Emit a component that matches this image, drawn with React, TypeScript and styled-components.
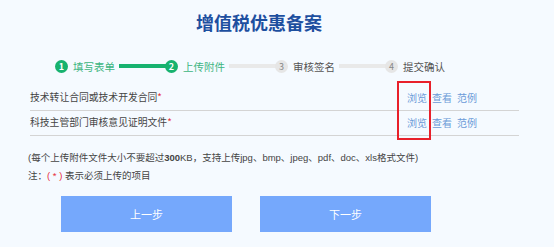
import styled, { createGlobalStyle } from "styled-components";

const GlobalStyle = createGlobalStyle`
  html, body {
    margin: 0;
    padding: 0;
    background: #f5faff;
  }
  body {
    font-family: "Noto Sans CJK SC", "Noto Sans", sans-serif;
    color: #444;
  }
`;

const Page = styled.div`
  width: 554px;
  height: 247px;
  overflow: hidden;
  background: #f5faff;
`;

const Title = styled.h1`
  margin: 10px 0 0;
  padding-right: 36px;
  height: 24px;
  line-height: 24px;
  text-align: center;
  font-size: 18px;
  font-weight: 700;
  color: #1d4f9f;
`;

const Steps = styled.div`
  display: flex;
  align-items: center;
  height: 14px;
  margin-top: 25px;
  padding-left: 55px;
`;

const Circle = styled.span<{ $active: boolean }>`
  position: relative;
  width: 13px;
  height: 13px;
  border-radius: 50%;
  display: flex;
  align-items: center;
  justify-content: center;
  font-size: 9px;
  font-weight: ${(p) => (p.$active ? 700 : 400)};
  background: ${(p) => (p.$active ? "#17b26f" : "#e6e6e6")};
  color: ${(p) => (p.$active ? "#fff" : "#888")};
`;

const StepLabel = styled.span<{ $active: boolean }>`
  margin-left: 5px;
  font-size: 10.5px;
  color: ${(p) => (p.$active ? "#3cb581" : "#555")};
`;

const Bar = styled.span<{ $active: boolean }>`
  width: 48px;
  height: 4px;
  margin: 0 -2px 0 4px;
  background: ${(p) => (p.$active ? "#17b26f" : "#e9e9e9")};
`;

const Rows = styled.div`
  position: relative;
  margin: 13px 35px 0 30px;
`;

const Row = styled.div`
  display: grid;
  grid-template-columns: 377px auto;
  align-items: center;
  height: 22px;
  padding-bottom: 2px;
  border-bottom: 1px solid #d4d4d4;
  font-size: 9.8px;
  color: #444;
`;

const Star = styled.span`
  color: #e8303a;
`;

const Links = styled.div`
  display: flex;
  gap: 5px;
`;

const Link = styled.a`
  color: #6b9bd8;
  text-decoration: none;
  font-size: 10px;
`;

const Highlight = styled.div`
  position: absolute;
  top: -5px;
  left: 367px;
  width: 30px;
  height: 55px;
  border: 2px solid #e8202a;
`;

const Notes = styled.div`
  margin: 13px 0 0 28px;
  font-family: "Liberation Sans", "Noto Sans CJK SC", sans-serif;
  font-size: 9.5px;
  line-height: 18px;
  color: #444;
`;

const Strong = styled.b`
  font-weight: 700;
`;

const Buttons = styled.div`
  display: flex;
  gap: 28px;
  margin-top: 11px;
  padding-left: 61px;
`;

const Button = styled.button`
  width: 171px;
  height: 36px;
  border: 0;
  background: #75a8fc;
  color: #fff;
  font-family: inherit;
  font-size: 11px;
  cursor: pointer;
`;

const steps = ["填写表单", "上传附件", "审核签名", "提交确认"];
const current = 2;

const files = ["技术转让合同或技术开发合同", "科技主管部门审核意见证明文件"];

const App = () => (
  <Page>
    <GlobalStyle />
    <Title>增值税优惠备案</Title>
    <Steps>
      {steps.map((label, i) => (
        <span key={label} style={{ display: "contents" }}>
          {i > 0 && <Bar $active={i < current} />}
          <Circle $active={i < current}>{i + 1}</Circle>
          <StepLabel $active={i < current}>{label}</StepLabel>
        </span>
      ))}
    </Steps>
    <Rows>
      {files.map((name) => (
        <Row key={name}>
          <span>
            {name}
            <Star>*</Star>
          </span>
          <Links>
            <Link href="#">浏览</Link>
            <Link href="#">查看</Link>
            <Link href="#">范例</Link>
          </Links>
        </Row>
      ))}
      <Highlight />
    </Rows>
    <Notes>
      <div>
        (每个上传附件文件大小不要超过<Strong>300</Strong>KB，支持上传jpg、bmp、jpeg、pdf、doc、xls格式文件)
      </div>
      <div>
        注：<Star>( * )</Star> 表示必须上传的项目
      </div>
    </Notes>
    <Buttons>
      <Button>上一步</Button>
      <Button>下一步</Button>
    </Buttons>
  </Page>
);

export default App;
